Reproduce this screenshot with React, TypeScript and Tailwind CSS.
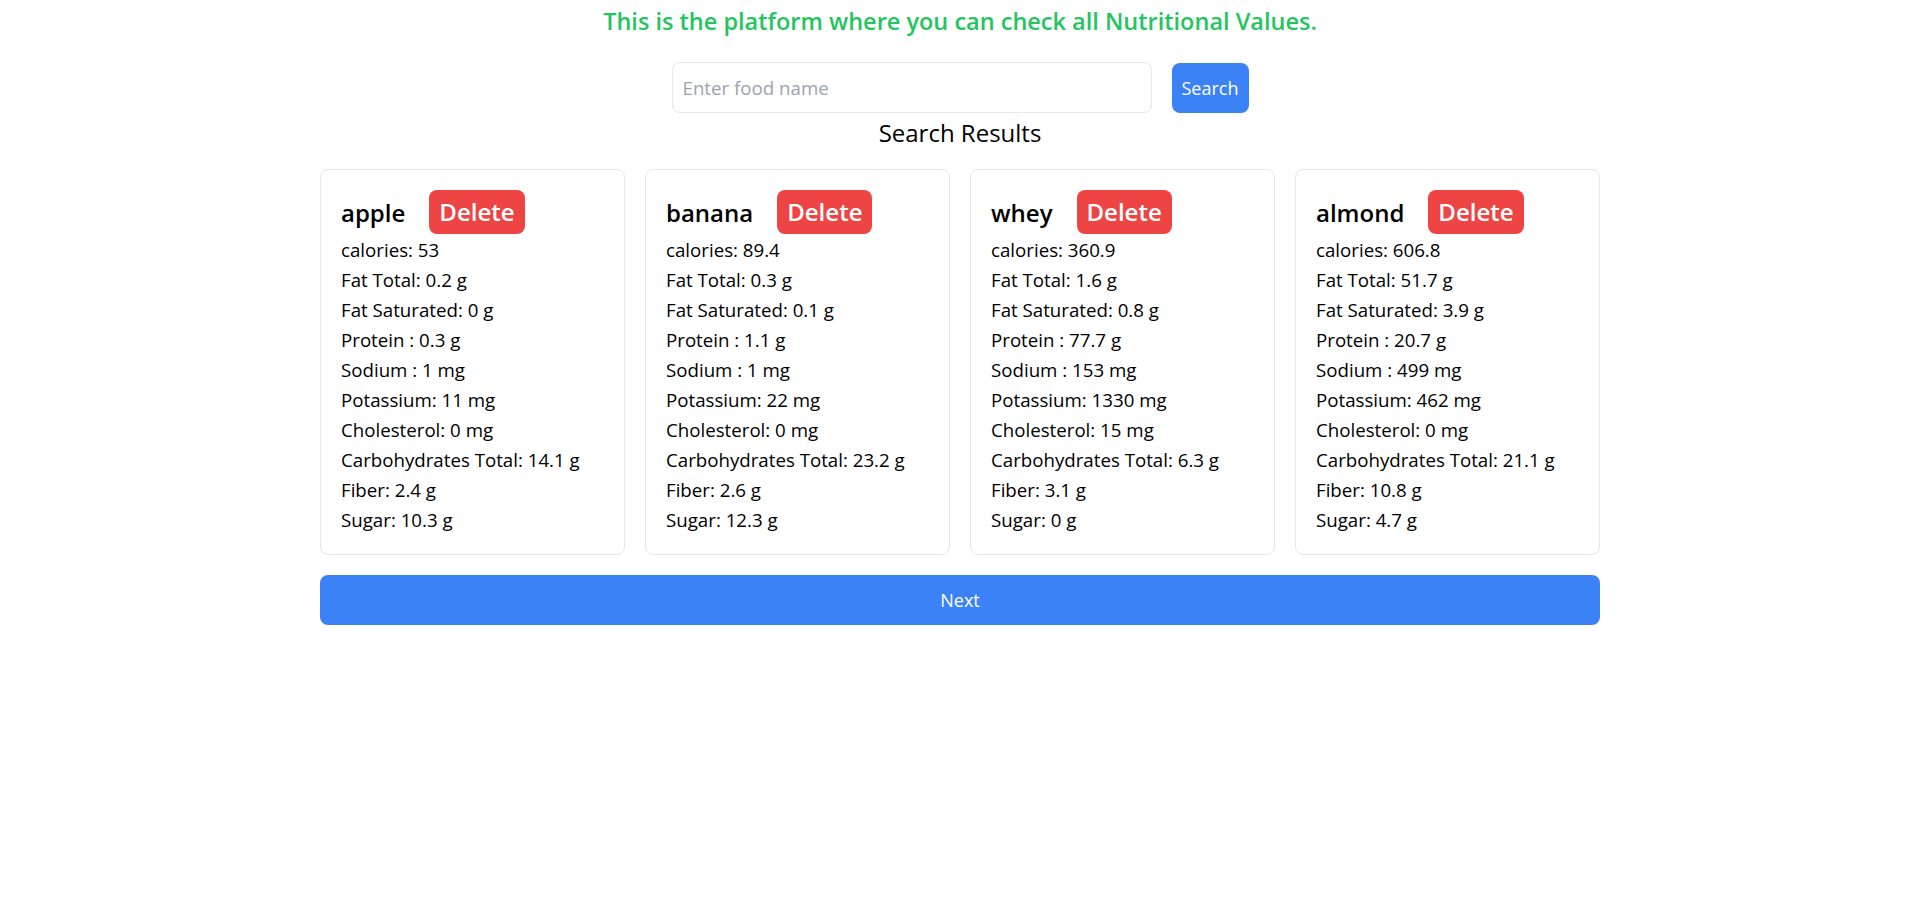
import { useState } from "react"

type Food = {
  name: string
  calories: number
  fat_total_g: number
  fat_saturated_g: number
  protein_g: number
  sodium_mg: number
  potassium_mg: number
  cholesterol_mg: number
  carbohydrates_total_g: number
  fiber_g: number
  sugar_g: number
}

const initialFoods: Food[] = [
  {
    name: "apple",
    calories: 53,
    fat_total_g: 0.2,
    fat_saturated_g: 0,
    protein_g: 0.3,
    sodium_mg: 1,
    potassium_mg: 11,
    cholesterol_mg: 0,
    carbohydrates_total_g: 14.1,
    fiber_g: 2.4,
    sugar_g: 10.3,
  },
  {
    name: "banana",
    calories: 89.4,
    fat_total_g: 0.3,
    fat_saturated_g: 0.1,
    protein_g: 1.1,
    sodium_mg: 1,
    potassium_mg: 22,
    cholesterol_mg: 0,
    carbohydrates_total_g: 23.2,
    fiber_g: 2.6,
    sugar_g: 12.3,
  },
  {
    name: "whey",
    calories: 360.9,
    fat_total_g: 1.6,
    fat_saturated_g: 0.8,
    protein_g: 77.7,
    sodium_mg: 153,
    potassium_mg: 1330,
    cholesterol_mg: 15,
    carbohydrates_total_g: 6.3,
    fiber_g: 3.1,
    sugar_g: 0,
  },
  {
    name: "almond",
    calories: 606.8,
    fat_total_g: 51.7,
    fat_saturated_g: 3.9,
    protein_g: 20.7,
    sodium_mg: 499,
    potassium_mg: 462,
    cholesterol_mg: 0,
    carbohydrates_total_g: 21.1,
    fiber_g: 10.8,
    sugar_g: 4.7,
  },
]

export default function App() {
  const [query, setQuery] = useState("")
  const [foods, setFoods] = useState<Food[]>(initialFoods)

  const handleDelete = (name: string) => {
    setFoods(foods.filter((f) => f.name !== name))
  }

  return (
    <div className="min-h-screen bg-white font-['Open_Sans','Noto_Sans',sans-serif] text-black">
      <div className="flex flex-col items-center pt-[5px]">
        <h1 className="text-[23.5px] leading-8 font-semibold text-[#22c55e]">
          This is the platform where you can check all Nutritional Values.
        </h1>

        <div className="mt-[25px] flex items-center gap-5">
          <input
            type="text"
            value={query}
            onChange={(e) => setQuery(e.target.value)}
            placeholder="Enter food name"
            className="h-[51px] w-[480px] rounded-lg border border-[#e5e7eb] px-2.5 text-[18.7px] outline-none placeholder:text-[#9ca3af]"
          />
          <button className="h-[50px] rounded-lg bg-[#3b82f6] px-2.5 text-lg text-white">
            Search
          </button>
        </div>

        <h2 className="mt-1 text-2xl leading-8 font-medium">Search Results</h2>

        <div className="mt-5 w-full max-w-7xl">
          <div className="grid grid-cols-4 gap-5">
            {foods.map((food) => (
              <div key={food.name} className="flex flex-col gap-0.5 rounded-lg border border-[#e5e7eb] p-5">
                <div className="flex items-center gap-6">
                  <h3 className="pt-0.5 text-2xl leading-8 font-semibold">{food.name}</h3>
                  <button
                    onClick={() => handleDelete(food.name)}
                    className="rounded-lg bg-[#ef4444] px-2.5 py-1.5 text-2xl leading-8 font-semibold text-white"
                  >
                    Delete
                  </button>
                </div>
                <p className="text-[18.7px] leading-7">calories: {food.calories}</p>
                <p className="text-[18.7px] leading-7">Fat Total: {food.fat_total_g} g</p>
                <p className="text-[18.7px] leading-7">Fat Saturated: {food.fat_saturated_g} g</p>
                <p className="text-[18.7px] leading-7">Protein : {food.protein_g} g</p>
                <p className="text-[18.7px] leading-7">Sodium : {food.sodium_mg} mg</p>
                <p className="text-[18.7px] leading-7">Potassium: {food.potassium_mg} mg</p>
                <p className="text-[18.7px] leading-7">Cholesterol: {food.cholesterol_mg} mg</p>
                <p className="text-[18.7px] leading-7">Carbohydrates Total: {food.carbohydrates_total_g} g</p>
                <p className="text-[18.7px] leading-7">Fiber: {food.fiber_g} g</p>
                <p className="text-[18.7px] leading-7">Sugar: {food.sugar_g} g</p>
              </div>
            ))}
          </div>

          <button className="mt-5 h-[50px] w-full rounded-lg bg-[#3b82f6] text-lg text-white">Next</button>
        </div>
      </div>
    </div>
  )
}
